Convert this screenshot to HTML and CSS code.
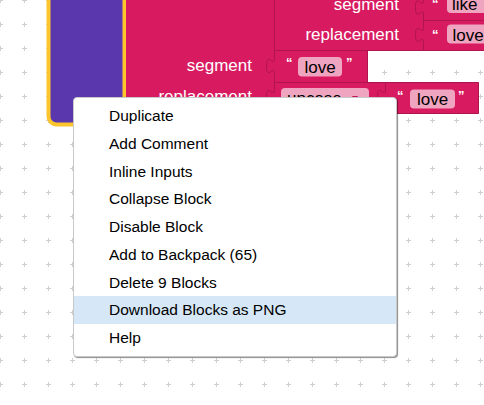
FILE: index.html
```
<!DOCTYPE html>
<html>
<head>
<meta charset="utf-8">
<link rel="stylesheet" href="styles.css">
</head>
<body>
<div class="workspace">
  <svg class="canvas" width="484" height="405" viewBox="0 0 484 405">
    <defs>
      <pattern id="grid" patternUnits="userSpaceOnUse" x="-12" y="-12" width="24" height="24">
        <path d="M10 12.5H15M12.5 10V15" stroke="#cfcfcf" stroke-width="1" fill="none"/>
      </pattern>
    </defs>
    <rect width="484" height="405" fill="url(#grid)"/>

    <!-- purple parent block (selected) -->
    <path class="blk-purple" d="M48.5 -10V116.5a8 8 0 0 0 8 8H124.5V-10Z"/>

    <!-- outer replace block -->
    <path class="blk-pink-base" d="M126 -10H276V140H126Z"/>
    <text class="lbl" x="252" y="71">segment</text>
    <text class="lbl" x="252" y="102">replacement</text>

    <!-- inner replace block -->
    <path class="blk-pink" d="M274.5 -10H500V50.5H274.5Z"/>
    <text class="lbl" x="399" y="10">segment</text>
    <text class="lbl" x="399" y="40">replacement</text>

    <!-- like -->
    <path class="blk-pink" d="M423.5 -10H500V20.5H423.5V15c0,-10 -8,8 -8,-7.5s8,2.5 8,-7.5Z"/>
    <text class="q" x="432" y="8">“</text>
    <rect class="pill" x="447" y="-7" width="60" height="20" rx="4"/>
    <text class="ptxt" x="452" y="10">like</text>

    <!-- love inner -->
    <path class="blk-pink" d="M423.5 20.5H500V50.5H423.5V42.5c0,-10 -8,8 -8,-7.5s8,2.5 8,-7.5Z"/>
    <text class="q" x="432" y="38.5">“</text>
    <rect class="pill" x="447" y="24.5" width="60" height="19" rx="4"/>
    <text class="ptxt" x="452.5" y="41">love</text>

    <!-- love 1 -->
    <path class="blk-pink" d="M274.5 50.5H367.5V82.5H274.5V73.5c0,-10 -8,8 -8,-7.5s8,2.5 8,-7.5Z"/>
    <text class="q" x="286" y="66.5">“</text>
    <rect class="pill" x="298" y="57" width="44" height="19.5" rx="4"/>
    <text class="ptxt mid" x="320" y="72.5">love</text>
    <text class="q" x="346" y="66.5">”</text>

    <!-- upcase -->
    <path class="blk-pink" d="M274.5 82.5H386V130H274.5V104.5c0,-10 -8,8 -8,-7.5s8,2.5 8,-7.5Z"/>
    <rect class="pill" x="281" y="88" width="88" height="20" rx="4"/>
    <text class="ptxt" x="287" y="104">upcase</text>
    <text class="arrow" x="352" y="102">▾</text>

    <!-- love 2 -->
    <path class="blk-pink" d="M385.5 82.5H478.5V113.5H385.5V104.5c0,-10 -8,8 -8,-7.5s8,2.5 8,-7.5Z"/>
    <text class="q" x="397" y="99.5">“</text>
    <rect class="pill" x="410" y="89.5" width="45" height="19" rx="4"/>
    <text class="ptxt mid" x="432.5" y="105">love</text>
    <text class="q" x="458" y="99.5">”</text>
  </svg>

  <div class="menu">
    <div class="item">Duplicate</div>
    <div class="item">Add Comment</div>
    <div class="item">Inline Inputs</div>
    <div class="item">Collapse Block</div>
    <div class="item">Disable Block</div>
    <div class="item">Add to Backpack (65)</div>
    <div class="item">Delete 9 Blocks</div>
    <div class="item active">Download Blocks as PNG</div>
    <div class="item">Help</div>
  </div>
</div>
</body>
</html>
```

FILE: styles.css
```
html, body {
  margin: 0;
  padding: 0;
  background: #fff;
  overflow: hidden;
}

.workspace {
  position: relative;
  width: 484px;
  height: 405px;
  overflow: hidden;
  font-family: "Liberation Sans", Arial, sans-serif;
}

.canvas {
  display: block;
}

.blk-purple {
  fill: #5b37ae;
  stroke: #fcc52c;
  stroke-width: 4;
}

.blk-pink-base {
  fill: #d81b60;
}

.blk-pink {
  fill: #d81b60;
  stroke: #b0144d;
  stroke-width: 1;
}

.lbl {
  font-family: "Liberation Sans", Arial, sans-serif;
  font-size: 17px;
  fill: #fff;
  text-anchor: end;
}

.q {
  font-family: "Liberation Sans", Arial, sans-serif;
  font-size: 13px;
  font-weight: bold;
  fill: #fff;
}

.pill {
  fill: #efa4bf;
}

.ptxt {
  font-family: "Liberation Sans", Arial, sans-serif;
  font-size: 17px;
  fill: #000;
}

.ptxt.mid {
  text-anchor: middle;
}

.arrow {
  font-family: "DejaVu Sans", sans-serif;
  font-size: 12px;
  fill: #c2185b;
}

.menu {
  position: absolute;
  left: 73px;
  top: 97px;
  width: 322px;
  padding: 4px 0;
  background: #fff;
  border: 1px solid #c9c9c9;
  border-radius: 4px;
  box-shadow: 1px 1px 1px rgba(0, 0, 0, 0.45);
  font-family: "Liberation Sans", Arial, sans-serif;
  font-size: 15.5px;
  color: #000;
}

.item {
  padding: 6px 20px 6px 35px;
  line-height: 15.75px;
  white-space: nowrap;
}

.item.active {
  background: #d6e8f7;
}
```
